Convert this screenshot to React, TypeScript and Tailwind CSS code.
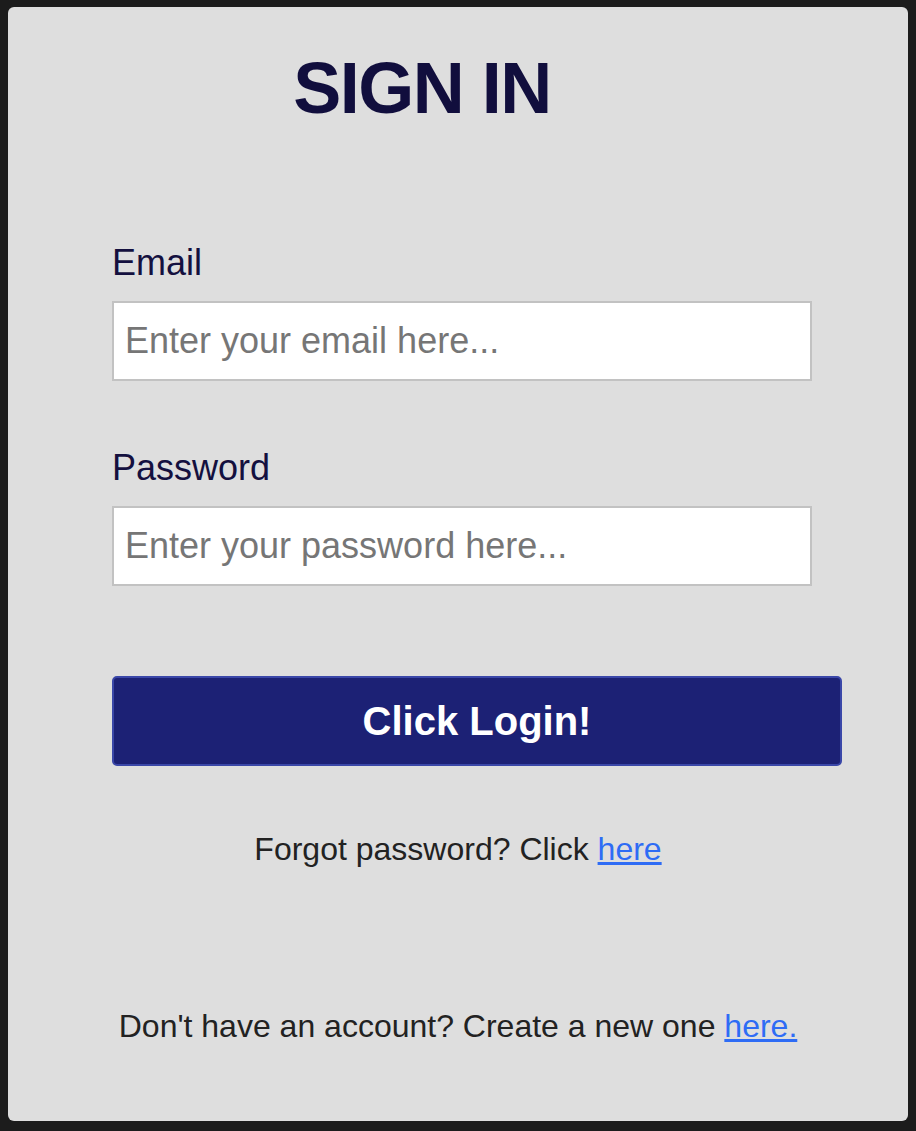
import { useState } from 'react';

const font = { fontFamily: '"Liberation Sans", Arial, sans-serif' };

export default function App() {
    const [email, setEmail] = useState('');
    const [password, setPassword] = useState('');

    return (
        <div
            className="min-h-[1131px] w-full bg-[#1c1c1c] pt-[7px] pl-2"
            style={font}
        >
            <div className="flex h-[1114px] w-[900px] flex-col rounded-md bg-[#dedede] pt-[45px]">
                {/* Title */}
                <h1 className="pr-[72px] text-center text-[72px] leading-none font-bold tracking-[-1.5px] text-[#110e3d]">
                    SIGN IN
                </h1>

                {/* Form */}
                <form
                    className="mt-[121px] flex flex-col pl-[104px]"
                    onSubmit={(e) => e.preventDefault()}
                >
                    <label className="block text-[36px] leading-none text-[#14103f]">
                        Email
                    </label>
                    <input
                        type="email"
                        placeholder="Enter your email here..."
                        value={email}
                        onChange={(e) => setEmail(e.target.value)}
                        className="mt-5 h-[80px] w-[700px] border-2 border-[#c2c2c2] bg-white px-[11px] text-[36px] text-[#222] placeholder:text-[#767676] focus:outline-none"
                    />

                    <label className="mt-[69px] block text-[36px] leading-none text-[#14103f]">
                        Password
                    </label>
                    <input
                        type="password"
                        placeholder="Enter your password here..."
                        value={password}
                        onChange={(e) => setPassword(e.target.value)}
                        className="mt-5 h-[80px] w-[700px] border-2 border-[#c2c2c2] bg-white px-[11px] text-[36px] text-[#222] placeholder:text-[#767676] focus:outline-none"
                    />

                    <button
                        type="submit"
                        className="mt-[90px] h-[90px] w-[730px] rounded-[5px] border-2 border-[#3a47a8] bg-[#1c2175] text-[40px] font-bold text-white"
                    >
                        Click Login!
                    </button>
                </form>

                {/* Links */}
                <p className="mt-[67px] text-center text-[32px] leading-none text-[#222]">
                    Forgot password? Click{' '}
                    <a href="#" className="text-[#2e6cf5] underline">
                        here
                    </a>
                </p>

                <p className="mt-[145px] text-center text-[32px] leading-none text-[#222]">
                    Don't have an account? Create a new one{' '}
                    <a href="#" className="text-[#2e6cf5] underline">
                        here.
                    </a>
                </p>
            </div>
        </div>
    );
}
